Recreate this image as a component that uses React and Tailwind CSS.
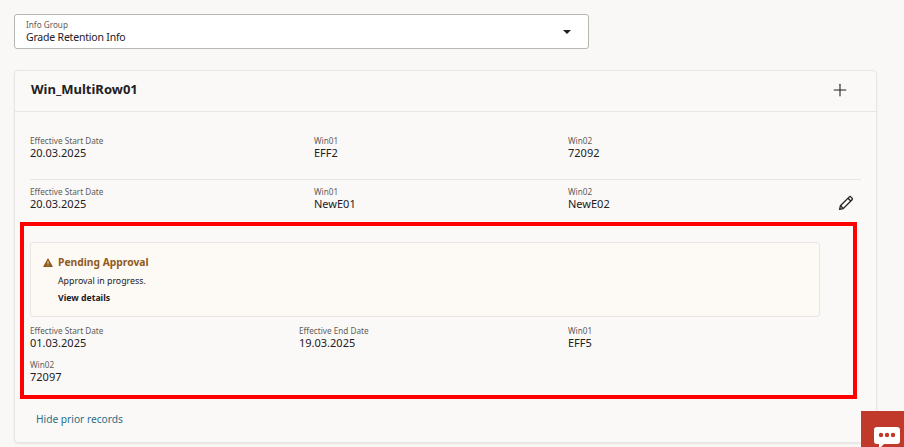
import React from 'react';
import { Plus } from 'lucide-react';

const Field = ({ label, value, className = '' }) => (
  <div className={className}>
    <div className="text-[8.2px] leading-[10px] text-[#5f5c58]">{label}</div>
    <div className="text-[11px] leading-[13px] text-[#22201e]">{value}</div>
  </div>
);

const PencilIcon = () => (
  <svg width="16" height="16" viewBox="0 0 16 16" fill="none" stroke="#22201e" strokeWidth="1.3" strokeLinejoin="round">
    <path d="M1.6 14.4l.8-3.6L11.3 1.9a1 1 0 0 1 1.4 0l1.4 1.4a1 1 0 0 1 0 1.4l-8.9 8.9z" />
    <path d="M10 3.2l2.8 2.8M2.6 10.8l2.6 2.6" />
  </svg>
);

const WarningIcon = () => (
  <svg width="10" height="9" viewBox="0 0 10 9">
    <path d="M5 0l5 9H0z" fill="#8f5a1c" />
    <path d="M4.6 3h.8v3h-.8zM4.6 6.6h.8v.9h-.8z" fill="#fdf9f4" />
  </svg>
);

const ChatIcon = () => (
  <svg width="26" height="26" viewBox="0 0 26 26">
    <path d="M3 0h20a3 3 0 0 1 3 3v11a3 3 0 0 1-3 3H10l-5 5v-5H3a3 3 0 0 1-3-3V3a3 3 0 0 1 3-3z" fill="#fff" />
    <circle cx="7" cy="8" r="2.2" fill="#c0392b" />
    <circle cx="13" cy="8" r="2.2" fill="#c0392b" />
    <circle cx="19" cy="8" r="2.2" fill="#c0392b" />
  </svg>
);

export default function App() {
  return (
    <div className="relative h-[447px] w-[904px] overflow-hidden bg-[#f9f8f6] px-[14px] pt-[14px] font-['Noto_Sans',sans-serif]">
      {/* Info group select */}
      <div className="flex h-[35px] w-[575px] items-center justify-between rounded-[3px] border border-[#b9b6b1] bg-white pl-[11px] pr-[17px]">
        <div>
          <div className="text-[8.2px] leading-[11px] text-[#5f5c58]">Info Group</div>
          <div className="text-[10.5px] leading-[15px] tracking-[-0.2px] text-[#22201e]">Grade Retention Info</div>
        </div>
        <div className="h-0 w-0 border-x-[4px] border-t-[4px] border-x-transparent border-t-[#22201e]" />
      </div>

      {/* Card */}
      <div className="mt-[21px] h-[373px] w-[863px] rounded-[4px] border border-[#e8e6e2] bg-[#faf9f7] shadow-[0_1px_2px_rgba(0,0,0,0.08)]">
        <div className="flex h-[41px] items-center justify-between border-b border-[#e8e6e2] pb-[2px] pl-[16px] pr-[26px]">
          <h2 className="text-[13px] font-bold text-[#22201e]">Win_MultiRow01</h2>
          <Plus size={20} strokeWidth={1.3} color="#22201e" />
        </div>

        <div className="mx-[15px] flex h-[68px] items-end border-b border-[#e8e6e2] pb-[20px]">
          <Field label="Effective Start Date" value="20.03.2025" className="w-[284px]" />
          <Field label="Win01" value="EFF2" className="w-[254px]" />
          <Field label="Win02" value="72092" />
        </div>

        <div className="ml-[15px] mr-[22px] flex h-[32px] items-end pb-[2px]">
          <Field label="Effective Start Date" value="20.03.2025" className="w-[284px]" />
          <Field label="Win01" value="NewE01" className="w-[254px]" />
          <Field label="Win02" value="NewE02" />
          <div className="ml-auto mb-[-1px]">
            <PencilIcon />
          </div>
        </div>

        {/* Highlighted pending record */}
        <div className="ml-[5px] mt-[10px] h-[177px] w-[837px] border-[4px] border-[#fe0000] pl-[6px] pr-[33px] pt-[16px]">
          <div className="h-[75px] rounded-[3px] border border-[#e8e6e2] bg-[#fdf9f4] pl-[12px] pt-[11px]">
            <div className="flex items-center gap-[5px]">
              <WarningIcon />
              <span className="text-[10.3px] font-bold leading-[16px] text-[#8f5a1c]">Pending Approval</span>
            </div>
            <div className="ml-[15px] mt-[4px] text-[8.8px] leading-[14px] text-[#22201e]">Approval in progress.</div>
            <div className="ml-[15px] mt-[3px] text-[8.7px] font-bold leading-[14px] text-[#22201e]">View details</div>
          </div>
          <div className="mt-[9px] flex">
            <Field label="Effective Start Date" value="01.03.2025" className="w-[269px]" />
            <Field label="Effective End Date" value="19.03.2025" className="w-[269px]" />
            <Field label="Win01" value="EFF5" />
          </div>
          <Field label="Win02" value="72097" className="mt-[11px]" />
        </div>

        <div className="ml-[21px] mt-[12px] text-[10.2px] leading-[16px] text-[#2b6d85]">Hide prior records</div>
      </div>

      {/* Feedback button */}
      <div className="absolute left-[861px] top-[411px] h-[36px] w-[43px] bg-[#c0392b] pl-[13px] pt-[16px]">
        <ChatIcon />
      </div>
    </div>
  );
}
